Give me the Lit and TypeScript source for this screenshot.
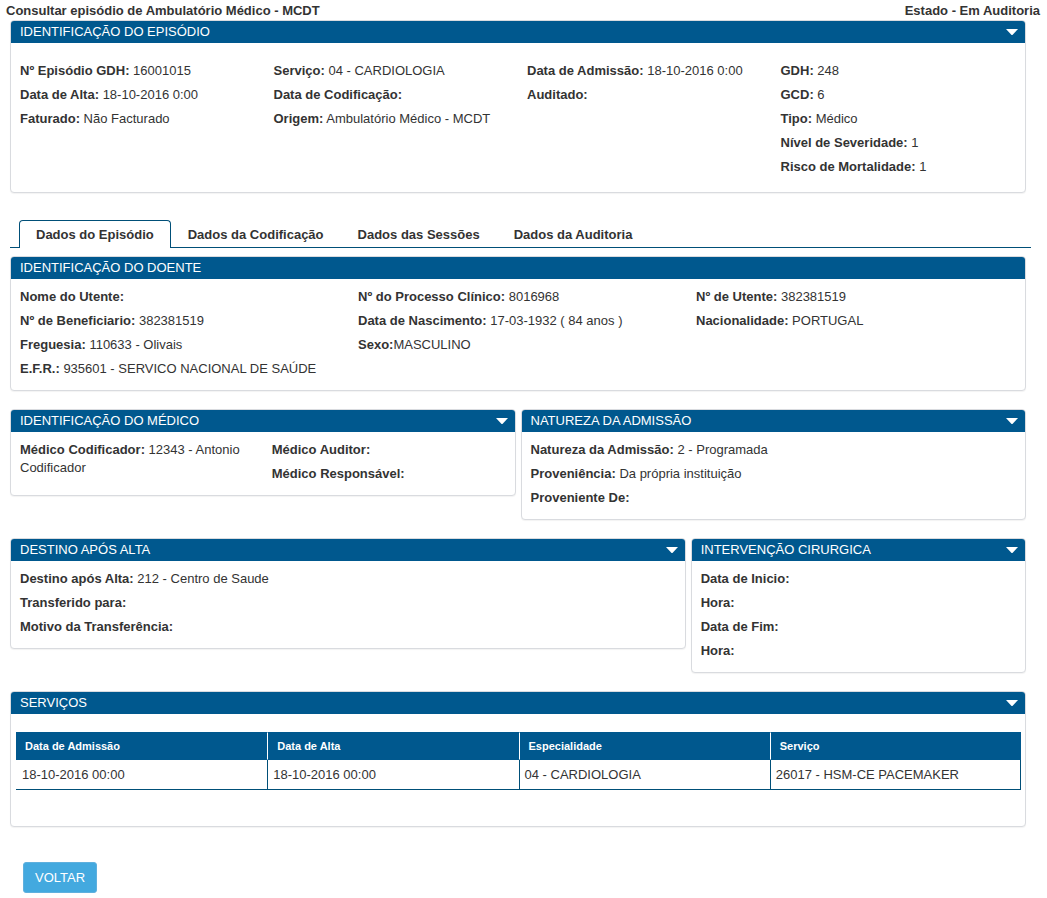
import { LitElement, html, css, nothing } from "lit";
import { customElement, property, state } from "lit/decorators.js";

type Field = { label: string; value?: string; tight?: boolean };

@customElement("info-panel")
class InfoPanel extends LitElement {
  @property() heading = "";
  @property({ type: Boolean }) collapsible = false;
  @state() private open = true;

  static styles = css`
    :host {
      display: block;
      min-width: 0;
    }
    .panel {
      border: 1px solid #d9dbdf;
      border-radius: 4px;
      background: #fff;
      box-shadow: 0 1px 1px rgba(0, 0, 0, 0.05);
    }
    .head {
      display: flex;
      align-items: center;
      justify-content: space-between;
      height: 22px;
      padding: 0 7px 0 9px;
      border-radius: 3px 3px 0 0;
      background: #00588e;
      color: #fff;
    }
    .title {
      margin: 0;
      font-size: 13px;
      line-height: 20px;
      font-weight: 400;
    }
    .toggle {
      display: flex;
      padding: 0;
      border: 0;
      background: none;
      cursor: pointer;
    }
    .toggle svg {
      display: block;
      width: 12px;
      height: 6px;
      fill: #fff;
    }
  `;

  render() {
    return html`
      <section class="panel">
        <header class="head">
          <h2 class="title">${this.heading}</h2>
          ${this.collapsible
            ? html`<button
                class="toggle"
                type="button"
                aria-label=${this.heading}
                aria-expanded=${this.open}
                @click=${() => (this.open = !this.open)}
              >
                <svg viewBox="0 0 12 6" aria-hidden="true"><path d="M0 0h12L6.700 5.700Q6 6.300 5.300 5.700Z" /></svg>
              </button>`
            : nothing}
        </header>
        ${this.open ? html`<slot></slot>` : nothing}
      </section>
    `;
  }
}

@customElement("app-root")
class AppRoot extends LitElement {
  @state() private tab = 0;

  static styles = css`
    :host {
      display: block;
      font-family: "Liberation Sans", Arial, sans-serif;
      font-size: 13px;
      line-height: 18px;
      color: #333;
    }
    .top {
      display: flex;
      justify-content: space-between;
      padding: 2px 7px 0 6px;
      font-weight: 700;
    }
    .page-title {
      margin: 0;
      font-size: 13px;
    }
    .content {
      margin: 0 21px 0 10px;
    }
    .fields {
      display: grid;
      padding: 9px 0 12px;
    }
    .roomy {
      padding: 19px 0 16px;
    }
    .c1 {
      grid-template-columns: 1fr;
    }
    .c2 {
      grid-template-columns: repeat(2, 1fr);
    }
    .c3 {
      grid-template-columns: repeat(3, 1fr);
    }
    .c4 {
      grid-template-columns: repeat(4, 1fr);
    }
    .column {
      display: flex;
      flex-direction: column;
      gap: 6px;
      padding: 0 9px;
    }
    .field {
      margin: 0;
    }
    .tabs {
      display: flex;
      margin: 27px 16px 8px 10px;
      padding-left: 9px;
      border-bottom: 1px solid #004f78;
    }
    .tab {
      margin-bottom: -1px;
      padding: 5px 16px 4px;
      border: 1px solid transparent;
      border-bottom: 0;
      border-radius: 4px 4px 0 0;
      background: none;
      color: inherit;
      font: inherit;
      font-weight: 700;
      cursor: pointer;
    }
    .active {
      border-color: #004f78;
      background: #fff;
    }
    .row {
      display: grid;
      grid-template-columns: repeat(12, 1fr);
      gap: 5px;
      align-items: start;
      margin: 18px 0;
    }
    .s4 {
      grid-column: span 4;
    }
    .s6 {
      grid-column: span 6;
    }
    .s8 {
      grid-column: span 8;
    }
    .table-area {
      padding: 18px 4px 36px 5px;
    }
    .table {
      width: 100%;
      table-layout: fixed;
      border-collapse: separate;
      border-spacing: 0;
    }
    .table th {
      height: 26px;
      padding: 0 0 0 9px;
      border: 1px solid #00588e;
      border-width: 1px 0;
      background: #00588e;
      color: #fff;
      font-size: 11px;
      text-align: left;
    }
    .table th + th {
      border-left: 1px solid #fff;
    }
    .table td {
      height: 29px;
      padding: 0 0 0 6px;
      border-bottom: 1px solid #004f78;
    }
    .table td + td {
      padding-left: 5px;
      border-left: 1px solid #004f78;
    }
    .table td:last-child {
      border-right: 1px solid #004f78;
    }
    .back {
      margin: 35px 0 6px 23px;
      padding: 5px 11px;
      border: 1px solid #5fb0de;
      border-radius: 3px;
      background: #43a9df;
      color: #fff;
      font: inherit;
      line-height: 19px;
      cursor: pointer;
    }
  `;

  private fields(columns: Field[][], roomy = false) {
    return html`<div class="fields c${columns.length} ${roomy ? "roomy" : ""}">
      ${columns.map(
        (column) => html`<div class="column">
          ${column.map(
            (f) => html`<p class="field"><b>${f.label}:</b>${f.tight ? "" : " "}${f.value ?? ""}</p>`
          )}
        </div>`
      )}
    </div>`;
  }

  render() {
    const tabs = ["Dados do Episódio", "Dados da Codificação", "Dados das Sessões", "Dados da Auditoria"];
    const heads = ["Data de Admissão", "Data de Alta", "Especialidade", "Serviço"];
    const service = ["18-10-2016 00:00", "18-10-2016 00:00", "04 - CARDIOLOGIA", "26017 - HSM-CE PACEMAKER"];

    return html`
      <header class="top">
        <h1 class="page-title">Consultar episódio de Ambulatório Médico - MCDT</h1>
        <span>Estado - Em Auditoria</span>
      </header>
      <div class="content">
        <info-panel heading="IDENTIFICAÇÃO DO EPISÓDIO" collapsible>
          ${this.fields(
            [
              [
                { label: "Nº Episódio GDH", value: "16001015" },
                { label: "Data de Alta", value: "18-10-2016 0:00" },
                { label: "Faturado", value: "Não Facturado" },
              ],
              [
                { label: "Serviço", value: "04 - CARDIOLOGIA" },
                { label: "Data de Codificação" },
                { label: "Origem", value: "Ambulatório Médico - MCDT" },
              ],
              [{ label: "Data de Admissão", value: "18-10-2016 0:00" }, { label: "Auditado" }],
              [
                { label: "GDH", value: "248" },
                { label: "GCD", value: "6" },
                { label: "Tipo", value: "Médico" },
                { label: "Nível de Severidade", value: "1" },
                { label: "Risco de Mortalidade", value: "1" },
              ],
            ],
            true
          )}
        </info-panel>
      </div>
      <nav class="tabs" role="tablist">
        ${tabs.map(
          (name, i) => html`<button
            class="tab ${i === this.tab ? "active" : ""}"
            type="button"
            role="tab"
            aria-selected=${i === this.tab}
            @click=${() => (this.tab = i)}
          >${name}</button>`
        )}
      </nav>
      <main class="content">
        <info-panel heading="IDENTIFICAÇÃO DO DOENTE">
          ${this.fields([
            [
              { label: "Nome do Utente" },
              { label: "Nº de Beneficiario", value: "382381519" },
              { label: "Freguesia", value: "110633 - Olivais" },
              { label: "E.F.R.", value: "935601 - SERVICO NACIONAL DE SAÚDE" },
            ],
            [
              { label: "Nº do Processo Clínico", value: "8016968" },
              { label: "Data de Nascimento", value: "17-03-1932 ( 84 anos )" },
              { label: "Sexo", value: "MASCULINO", tight: true },
            ],
            [
              { label: "Nº de Utente", value: "382381519" },
              { label: "Nacionalidade", value: "PORTUGAL" },
            ],
          ])}
        </info-panel>
        <div class="row">
          <info-panel class="s6" heading="IDENTIFICAÇÃO DO MÉDICO" collapsible>
            ${this.fields([
              [{ label: "Médico Codificador", value: "12343 - Antonio Codificador" }],
              [{ label: "Médico Auditor" }, { label: "Médico Responsável" }],
            ])}
          </info-panel>
          <info-panel class="s6" heading="NATUREZA DA ADMISSÃO" collapsible>
            ${this.fields([
              [
                { label: "Natureza da Admissão", value: "2 - Programada" },
                { label: "Proveniência", value: "Da própria instituição" },
                { label: "Proveniente De" },
              ],
            ])}
          </info-panel>
        </div>
        <div class="row">
          <info-panel class="s8" heading="DESTINO APÓS ALTA" collapsible>
            ${this.fields([
              [
                { label: "Destino após Alta", value: "212 - Centro de Saude" },
                { label: "Transferido para" },
                { label: "Motivo da Transferência" },
              ],
            ])}
          </info-panel>
          <info-panel class="s4" heading="INTERVENÇÃO CIRURGICA" collapsible>
            ${this.fields([
              [{ label: "Data de Inicio" }, { label: "Hora" }, { label: "Data de Fim" }, { label: "Hora" }],
            ])}
          </info-panel>
        </div>
        <info-panel heading="SERVIÇOS" collapsible>
          <div class="table-area">
            <table class="table">
              <thead>
                <tr>${heads.map((h) => html`<th scope="col">${h}</th>`)}</tr>
              </thead>
              <tbody>
                <tr>${service.map((s) => html`<td>${s}</td>`)}</tr>
              </tbody>
            </table>
          </div>
        </info-panel>
      </main>
      <button class="back" type="button">VOLTAR</button>
    `;
  }
}
